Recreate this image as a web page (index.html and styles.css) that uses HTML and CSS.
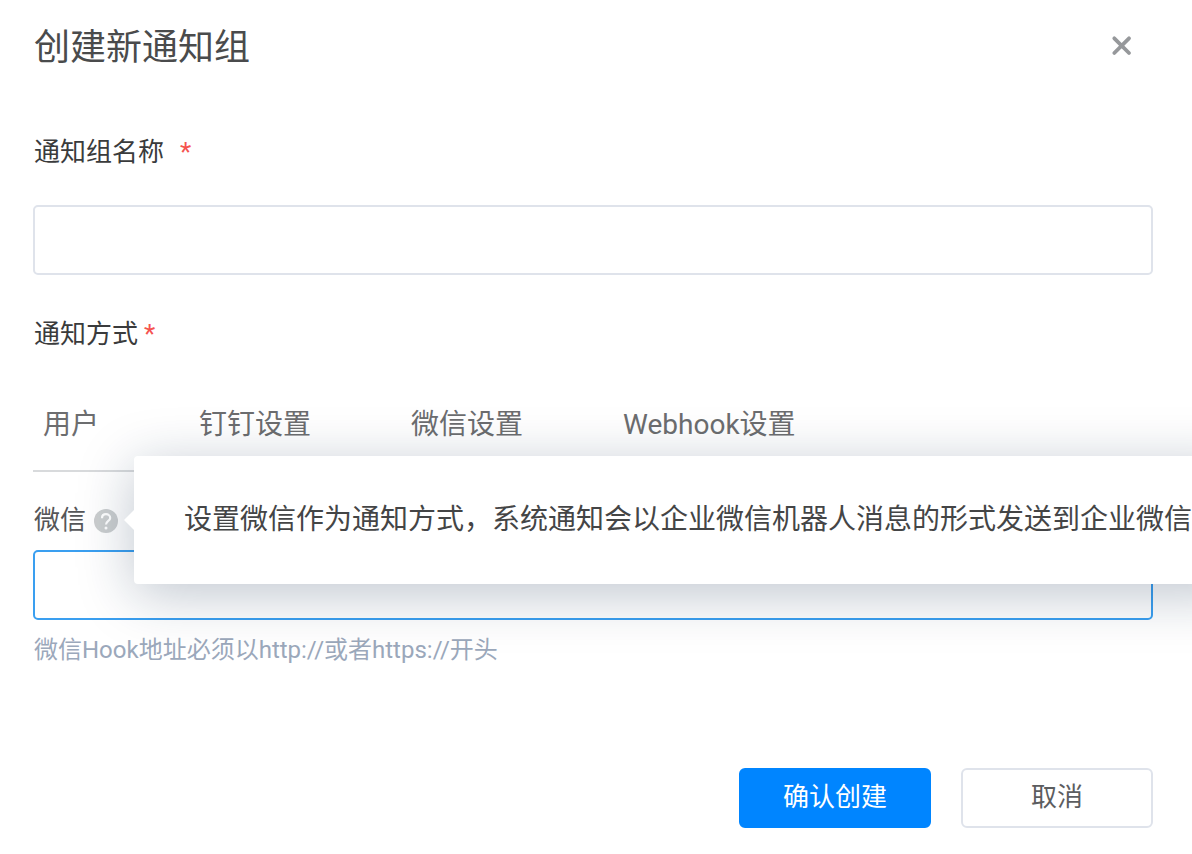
FILE: index.html
```html
<!DOCTYPE html>
<html lang="zh-CN">
<head>
    <meta charset="UTF-8">
    <meta name="viewport" content="width=device-width, initial-scale=1.0">
    <title>创建新通知组</title>
    <link rel="stylesheet" href="styles.css">
</head>
<body>
    <form class="dialog">
        <div class="dialog-header">
            <h1>创建新通知组</h1>
            <button type="button" class="close" aria-label="关闭">
                <svg width="24" height="24" viewBox="0 0 24 24">
                    <path d="M4.3 4.3L19 19M19 4.3L4.3 19" fill="none" stroke="#96989b" stroke-width="3.8" stroke-linecap="round"/>
                </svg>
            </button>
        </div>

        <div class="field">
            <label class="label label-wide" for="groupName">通知组名称 <span class="required">*</span></label>
            <input class="input" type="text" id="groupName">
        </div>

        <div class="label">通知方式 <span class="required">*</span></div>

        <nav class="tabs">
            <a href="#user">用户</a>
            <a href="#dingtalk">钉钉设置</a>
            <a href="#wechat">微信设置</a>
            <a href="#webhook">Webhook设置</a>
        </nav>

        <div class="hook">
            <div class="hook-title">
                <label for="wechatHook">微信</label>
                <span class="help">
                    <svg width="24" height="24" viewBox="0 0 24 24">
                        <circle cx="12" cy="12" r="12" fill="#cbcecf"/>
                        <path d="M8 9.2C8 6.7 9.7 5.2 12 5.2S16.2 6.7 16.2 8.9C16.2 11.8 12 12 12 15.6" fill="none" stroke="#fff" stroke-width="2.2"/>
                        <circle cx="12" cy="19" r="1.5" fill="#fff"/>
                    </svg>
                    <span class="tooltip" role="tooltip">设置微信作为通知方式，系统通知会以企业微信机器人消息的形式发送到企业微信</span>
                </span>
            </div>
            <input class="input input-active" type="text" id="wechatHook">
            <p class="hint">微信Hook地址必须以http://或者https://开头</p>
        </div>

        <div class="actions">
            <button type="submit" class="btn btn-primary">确认创建</button>
            <button type="button" class="btn">取消</button>
        </div>
    </form>
</body>
</html>
```

FILE: styles.css
```css
* {
    margin: 0;
    padding: 0;
    box-sizing: border-box;
}

body {
    font-family: Roboto, "Noto Sans CJK SC", sans-serif;
    font-size: 26px;
    line-height: 36px;
    color: #3a3b3c;
    background: #fff;
    overflow-x: hidden;
}

button,
input {
    font: inherit;
}

.dialog {
    padding: 20px 39px 26px 34px;
}

.dialog-header {
    display: flex;
    align-items: flex-start;
    justify-content: space-between;
    margin-bottom: 58px;
}

.dialog-header h1 {
    font-size: 36px;
    font-weight: 400;
    line-height: 56px;
    color: #4a4b4c;
}

.close {
    display: flex;
    margin: 14px 19px 0 0;
    border: none;
    background: none;
    cursor: pointer;
}

.field {
    margin-bottom: 41px;
}

.label {
    display: flex;
    gap: 6px;
}

.label-wide {
    gap: 16px;
    margin-bottom: 35px;
}

.required {
    color: #f5534f;
}

.input {
    display: block;
    width: calc(100% + 1px);
    height: 70px;
    margin-left: -1px;
    padding: 0 20px;
    border: 2px solid #dfe3eb;
    border-radius: 5px;
    background: #fff;
    outline: none;
}

.input:focus,
.input-active {
    border-color: #3a9ff0;
}

.tabs {
    display: flex;
    gap: 100px;
    margin: 53px 0 0 -1px;
    padding: 0 10px 25px;
    border-bottom: 2px solid #d8dadc;
    font-size: 28px;
    line-height: 40px;
}

.tabs a {
    color: #6c6d6f;
    text-decoration: none;
}

.hook {
    margin-top: 30px;
}

.hook-title {
    display: flex;
    align-items: center;
    gap: 8px;
    margin-bottom: 12px;
    color: #555658;
}

.help {
    position: relative;
    display: flex;
    margin-top: 2px;
}

.tooltip {
    position: absolute;
    left: 40px;
    top: -53px;
    padding: 42px 50px;
    border-radius: 4px;
    background: #fff;
    box-shadow: 0 10px 56px rgba(14, 40, 73, 0.27);
    color: #444546;
    font-size: 28px;
    line-height: 44px;
    white-space: nowrap;
}

.tooltip::before {
    content: "";
    position: absolute;
    top: 54px;
    left: -10px;
    border: 10px solid transparent;
    border-left: none;
    border-right-color: #fff;
}

.hint {
    margin-top: 12px;
    font-size: 24px;
    color: #9ba8bb;
}

.actions {
    display: flex;
    justify-content: flex-end;
    gap: 30px;
    margin-top: 100px;
}

.btn {
    width: 192px;
    height: 60px;
    padding-bottom: 2px;
    border: 2px solid #dfe3eb;
    border-radius: 6px;
    background: #fff;
    color: #5c5d5f;
    cursor: pointer;
}

.btn-primary {
    border-color: #0085ff;
    background: #0085ff;
    color: #fff;
}
```
